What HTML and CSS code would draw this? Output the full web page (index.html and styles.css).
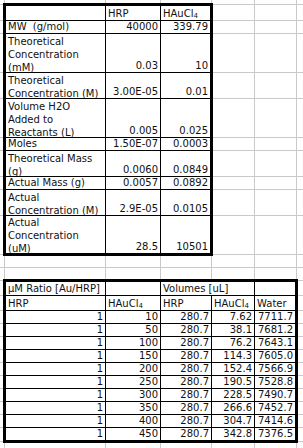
FILE: index.html
```html
<!DOCTYPE html>
<html>
<head>
<meta charset="utf-8">
<link rel="stylesheet" href="styles.css">
</head>
<body>
<table class="sheet">
  <colgroup>
    <col class="c0"><col class="ca"><col class="cb"><col class="cc"><col class="cd"><col class="ce"><col class="cf">
  </colgroup>
  <tbody>
    <tr class="h-top"><td></td><td></td><td></td><td></td><td></td><td></td><td></td></tr>

    <tr class="h16"><td></td><td class="k bt bl"></td><td class="k bt">HRP</td><td class="k bt br">HAuCl<sub>4</sub></td><td></td><td></td><td></td></tr>
    <tr class="h13"><td></td><td class="k bl">MW&nbsp; (g/mol)</td><td class="k n">40000</td><td class="k n br">339.79</td><td></td><td></td><td></td></tr>
    <tr class="h39"><td></td><td class="k bl"><div class="ml">Theoretical<br>Concentration<br>(mM)</div></td><td class="k n">0.03</td><td class="k n br">10</td><td></td><td></td><td></td></tr>
    <tr class="h26"><td></td><td class="k bl"><div class="ml">Theoretical<br>Concentration (M)</div></td><td class="k n">3.00E-05</td><td class="k n br">0.01</td><td></td><td></td><td></td></tr>
    <tr class="h39"><td></td><td class="k bl"><div class="ml">Volume H2O<br>Added to<br>Reactants (L)</div></td><td class="k n">0.005</td><td class="k n br">0.025</td><td></td><td></td><td></td></tr>
    <tr class="h13"><td></td><td class="k bl">Moles</td><td class="k n">1.50E-07</td><td class="k n br">0.0003</td><td></td><td></td><td></td></tr>
    <tr class="h26"><td></td><td class="k bl"><div class="ml">Theoretical Mass<br>(g)</div></td><td class="k n">0.0060</td><td class="k n br">0.0849</td><td></td><td></td><td></td></tr>
    <tr class="h13"><td></td><td class="k bl">Actual Mass (g)</td><td class="k n">0.0057</td><td class="k n br">0.0892</td><td></td><td></td><td></td></tr>
    <tr class="h26"><td></td><td class="k bl"><div class="ml">Actual<br>Concentration (M)</div></td><td class="k n">2.9E-05</td><td class="k n br">0.0105</td><td></td><td></td><td></td></tr>
    <tr class="h39"><td></td><td class="k bl bb"><div class="ml">Actual<br>Concentration<br>(uM)</div></td><td class="k n bb">28.5</td><td class="k n br bb">10501</td><td></td><td></td><td></td></tr>

    <tr class="h13"><td></td><td></td><td></td><td></td><td></td><td></td><td></td></tr>
    <tr class="h13"><td></td><td></td><td></td><td></td><td></td><td></td><td></td></tr>

    <tr class="h15"><td></td><td class="k bt bl">µM Ratio [Au/HRP]</td><td class="k bt"></td><td class="k bt" colspan="2">Volumes [uL]</td><td class="k bt br"></td><td></td></tr>
    <tr class="h15"><td></td><td class="k bl">HRP</td><td class="k">HAuCl<sub>4</sub></td><td class="k">HRP</td><td class="k">HAuCl<sub>4</sub></td><td class="k br">Water</td><td></td></tr>
    <tr class="h13"><td></td><td class="k n bl">1</td><td class="k n">10</td><td class="k n">280.7</td><td class="k n">7.62</td><td class="k n br">7711.7</td><td></td></tr>
    <tr class="h13"><td></td><td class="k n bl">1</td><td class="k n">50</td><td class="k n">280.7</td><td class="k n">38.1</td><td class="k n br">7681.2</td><td></td></tr>
    <tr class="h13"><td></td><td class="k n bl">1</td><td class="k n">100</td><td class="k n">280.7</td><td class="k n">76.2</td><td class="k n br">7643.1</td><td></td></tr>
    <tr class="h13"><td></td><td class="k n bl">1</td><td class="k n">150</td><td class="k n">280.7</td><td class="k n">114.3</td><td class="k n br">7605.0</td><td></td></tr>
    <tr class="h13"><td></td><td class="k n bl">1</td><td class="k n">200</td><td class="k n">280.7</td><td class="k n">152.4</td><td class="k n br">7566.9</td><td></td></tr>
    <tr class="h13"><td></td><td class="k n bl">1</td><td class="k n">250</td><td class="k n">280.7</td><td class="k n">190.5</td><td class="k n br">7528.8</td><td></td></tr>
    <tr class="h13"><td></td><td class="k n bl">1</td><td class="k n">300</td><td class="k n">280.7</td><td class="k n">228.5</td><td class="k n br">7490.7</td><td></td></tr>
    <tr class="h13"><td></td><td class="k n bl">1</td><td class="k n">350</td><td class="k n">280.7</td><td class="k n">266.6</td><td class="k n br">7452.7</td><td></td></tr>
    <tr class="h13"><td></td><td class="k n bl">1</td><td class="k n">400</td><td class="k n">280.7</td><td class="k n">304.7</td><td class="k n br">7414.6</td><td></td></tr>
    <tr class="h13"><td></td><td class="k n bl bb">1</td><td class="k n bb">450</td><td class="k n bb">280.7</td><td class="k n bb">342.8</td><td class="k n br bb">7376.5</td><td></td></tr>

    <tr class="h-top"><td></td><td></td><td></td><td></td><td></td><td></td><td></td></tr>
  </tbody>
</table>
</body>
</html>
```

FILE: styles.css
```css
html, body {
  margin: 0;
  padding: 0;
  overflow: hidden;
  background: #fff;
}

.sheet {
  border-collapse: collapse;
  table-layout: fixed;
  width: 342px;
  margin-left: -16px;
  margin-top: -16px;
  font-family: "DejaVu Sans", Verdana, sans-serif;
  font-size: 10px;
  color: #111;
}

.c0 { width: 20px; }
.ca { width: 101px; }
.cb { width: 55px; }
.cc { width: 51px; }
.cd { width: 43px; }
.ce { width: 42px; }
.cf { width: 30px; }

.sheet td {
  border: 1px solid #c9c9c9;
  padding: 0 2px 0 2px;
  line-height: 12px;
  vertical-align: bottom;
  white-space: nowrap;
  overflow: hidden;
  text-align: left;
}

.sheet td.n { text-align: right; }

.sheet td.k { border-color: #000; }
.sheet td.bt { border-top: 3px solid #000; }
.sheet td.bb { border-bottom: 3px solid #000; }
.sheet td.bl { border-left: 3px solid #000; }
.sheet td.br { border-right: 3px solid #000; }

.ml {
  line-height: 13px;
  margin-bottom: -2px;
}

.h-top { height: 20px; }
.h13 { height: 13px; }
.h15 { height: 15px; }
.h16 { height: 16px; }
.h26 { height: 26px; }
.h39 { height: 39px; }

sub {
  font-size: 7px;
  line-height: 0;
  vertical-align: -1px;
}
```
